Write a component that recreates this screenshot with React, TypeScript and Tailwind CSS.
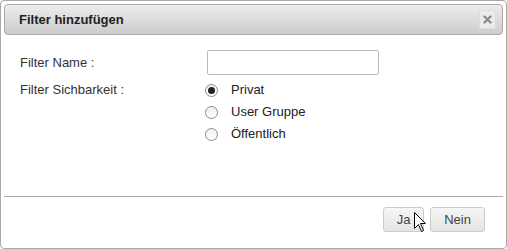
import React from "react";

function Radio({ checked, label }: { checked?: boolean; label: string }) {
  return (
    <div className="flex h-[22px] items-center">
      <span className="flex h-[13px] w-[13px] items-center justify-center rounded-full border border-[#8a8a8a] bg-gradient-to-b from-[#f0f0f0] to-[#ffffff]">
        {checked && <span className="h-[7px] w-[7px] rounded-full bg-[#222]" />}
      </span>
      <span className="ml-[13px] text-[13px] leading-[16px] text-[#222]">{label}</span>
    </div>
  );
}

export default function App() {
  return (
    <div
      className="relative flex h-[249px] w-[507px] flex-col rounded-[4px] border border-[#aaaaaa] bg-white p-[3px]"
      style={{ fontFamily: '"Liberation Sans", Arial, sans-serif' }}
    >
      <div className="flex h-[31px] shrink-0 items-center justify-between rounded-[4px] border border-[#aaaaaa] bg-gradient-to-b from-[#ededed] to-[#cccccc] pl-[14px] pr-[6px]">
        <span className="text-[13px] font-bold text-[#222]">Filter hinzufügen</span>
        <span className="flex h-[19px] w-[17px] items-center justify-center rounded-[2px] border border-[#dddddd] bg-[#ebebeb]">
          <svg width="9" height="9" viewBox="0 0 9 9">
            <path d="M1.5 1.5 L7.5 7.5 M7.5 1.5 L1.5 7.5" stroke="#8c8c8c" strokeWidth="2.4" strokeLinecap="round" />
          </svg>
        </span>
      </div>

      <div className="flex-1 pl-[16px] pt-[15px]">
        <div className="grid grid-cols-[185px_1fr]">
          <div className="flex items-center text-[13px] text-[#333]">Filter Name :</div>
          <div>
            <div className="ml-[2px] h-[25px] w-[172px] rounded-[2px] border border-[#bbbbbb] bg-white" />
          </div>
          <div className="pt-[7px] text-[13px] leading-[16px] text-[#333]">Filter Sichbarkeit :</div>
          <div className="mt-[4px] flex flex-col">
            <Radio checked label="Privat" />
            <Radio label="User Gruppe" />
            <Radio label="Öffentlich" />
          </div>
        </div>
      </div>

      <div className="flex h-[49px] shrink-0 justify-end gap-[6px] border-t border-[#aaaaaa] pr-[18px] pt-[10px]">
        <button className="h-[25px] w-[41px] rounded-[3px] border border-[#cccccc] bg-gradient-to-b from-[#f6f6f6] to-[#e4e4e4] text-[13px] text-[#444]">
          Ja
        </button>
        <button className="h-[25px] w-[55px] rounded-[3px] border border-[#cccccc] bg-gradient-to-b from-[#f6f6f6] to-[#e4e4e4] text-[13px] text-[#444]">
          Nein
        </button>
      </div>

      <svg className="absolute left-[413px] top-[211px]" width="13" height="21" viewBox="0 0 13 21">
        <path d="M0.5 0.5 L0.5 16.5 L4.5 12.5 L7.5 19.5 L9.5 18.5 L6.5 11.5 L11.5 11.5 Z" fill="#fff" stroke="#000" strokeWidth="1" strokeLinejoin="miter" />
      </svg>
    </div>
  );
}
